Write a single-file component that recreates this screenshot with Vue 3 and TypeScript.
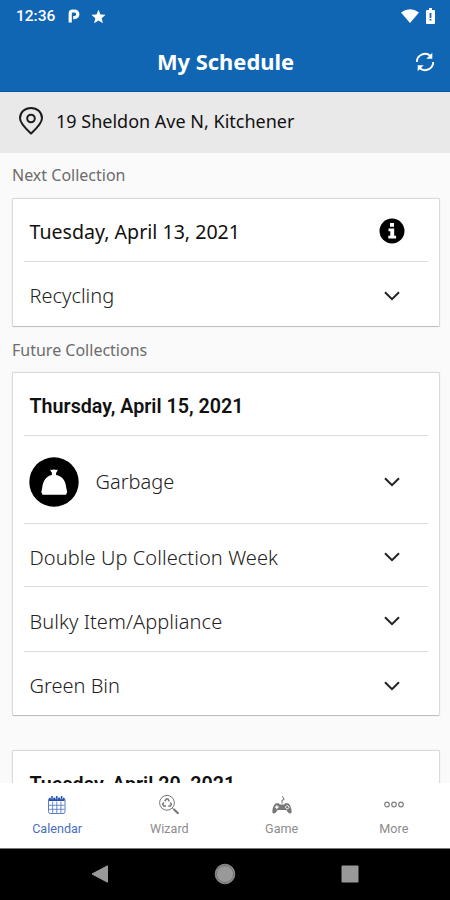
<script setup lang="ts">
interface Item {
  name: string
  icon?: boolean
  kind: string
}

const upcoming: Item[] = [
  { name: 'Garbage', icon: true, kind: 'garbage' },
  { name: 'Double Up Collection Week', kind: 'double' },
  { name: 'Bulky Item/Appliance', kind: 'bulky' },
  { name: 'Green Bin', kind: 'green' },
]
</script>

<template>
  <div class="screen">
    <div class="status">
      <span class="clock">12:36</span>
      <svg class="parking" viewBox="0 0 12 14" width="12" height="14">
        <path d="M2.200 13.500V4.500Q2.200 2 4.800 2H6.500a3.200 3.200 0 0 1 0 6.600H5.200" fill="none" stroke="#fff" stroke-width="3.200" />
      </svg>
      <svg class="star" viewBox="0 0 24 24" width="17" height="17">
        <path d="M12 17.800 18.200 21.500 16.500 14.500 22 9.700 14.800 9.100 12 2.500 9.200 9.100 2 9.700 7.500 14.500 5.800 21.500z" fill="#fff" />
      </svg>
      <span class="grow"></span>
      <svg class="wifi" viewBox="0 0 18 14" width="18" height="14">
        <path d="M0 3.400Q9-3 18 3.400L9 14z" fill="#fff" />
      </svg>
      <svg class="battery" viewBox="0 0 9 16" width="9" height="16">
        <path d="M3 0h3v2h2q1 0 1 1v12q0 1-1 1H1q-1 0-1-1V3q0-1 1-1h2z" fill="#fff" />
        <path d="M4.500 5v5M4.500 11v1.500" stroke="#1264b0" stroke-width="1.800" />
      </svg>
    </div>

    <header class="header">
      <h1>My Schedule</h1>
      <svg class="refresh" viewBox="0 0 20 20" width="20" height="20">
        <path d="M1.800 10A8.200 8.200 0 0 1 15.500 4M18.200 10A8.200 8.200 0 0 1 4.500 16" fill="none" stroke="#fff" stroke-width="1.900" />
        <path d="M17.300.8v6h-6zM2.700 19.200v-6h6z" fill="#fff" />
      </svg>
    </header>

    <div class="address">
      <svg viewBox="0 0 26 30" width="26" height="30">
        <path d="M13 27.500C9 23.800 2 17.500 2 12.200 2 6.200 7 2 13 2s11 4.200 11 10.200C24 17.500 17 23.800 13 27.500z" fill="none" stroke="#1c1c1c" stroke-width="2" stroke-linejoin="round" />
        <circle cx="13" cy="12.500" r="3.800" fill="none" stroke="#1c1c1c" stroke-width="2" />
      </svg>
      <span>19 Sheldon Ave N, Kitchener</span>
    </div>

    <main class="content">
      <h2 class="label">Next Collection</h2>
      <section class="card">
        <div class="row date-row">
          <span class="date">Tuesday, April 13, 2021</span>
          <svg class="info" viewBox="0 0 26 26" width="26" height="26">
            <circle cx="13" cy="13" r="12.500" fill="#000" />
            <path d="M11 5h4v3.800h-4zM9.500 10.500h5.700v7.300h1.900v2.700H9.300v-2.700h2v-4.600H9.500z" fill="#fff" />
          </svg>
        </div>
        <div class="row last recycling">
          <span class="item">Recycling</span>
          <svg class="chevron" viewBox="0 0 16 10" width="16" height="10"><path d="m1 1.200 7 7 7-7" /></svg>
        </div>
      </section>

      <h2 class="label future">Future Collections</h2>
      <section class="card">
        <div class="row date-row thursday"><span class="date strong">Thursday, April 15, 2021</span></div>
        <div v-for="(item, i) in upcoming" :key="item.name" class="row" :class="[item.kind, { last: i === upcoming.length - 1 }]">
          <svg v-if="item.icon" class="bag" viewBox="0 0 50 50" width="50" height="50">
            <circle cx="25" cy="25" r="24.700" fill="#000" />
            <path d="M21.500 12.500q1.200.7 2 .3 1.500-.8 3 0 1 .5 2-.3.700 1-1.400 3.200v2.300c6 1.200 9.400 5 10.200 13l.9 4-1.200 2.800h-23.500l-1.200-2.800.9-4c.6-7 4-11.800 9.700-13v-2.300q-2.100-2.200-1.400-3.200z" fill="#fff" />
          </svg>
          <span class="item">{{ item.name }}</span>
          <svg class="chevron" viewBox="0 0 16 10" width="16" height="10"><path d="m1 1.200 7 7 7-7" /></svg>
        </div>
      </section>

      <section class="card later">
        <div class="row date-row thursday"><span class="date strong">Tuesday, April 20, 2021</span></div>
      </section>
    </main>

    <nav class="tabs">
      <div class="tab active">
        <svg viewBox="0 0 20 20" width="20" height="20" fill="none" stroke="#5a7cc4">
          <rect x="1.500" y="3" width="16.500" height="15.500" rx="2" />
          <path d="M2 4.500h15.500" stroke="#2450aa" stroke-width="3" />
          <path d="M2 10.300h15.500M2 14.300h15.500M5.700 6.500v11.500M9.800 6.500v11.500M13.900 6.500v11.500" stroke-width=".9" />
          <path d="M5 .8v3.400M9.800.8v3.400M14.600.8v3.400" stroke="#fff" stroke-width="2.600" />
          <path d="M5 1v3.500M9.800 1v3.500M14.600 1v3.500" stroke="#2450aa" stroke-width="1.500" />
        </svg>
        <span>Calendar</span>
      </div>
      <div class="tab">
        <svg viewBox="0 0 20 20" width="20" height="20" fill="none" stroke="#777">
          <circle cx="8" cy="7.800" r="7.400" />
          <path d="m5.800 6.300 1.400-2.300h1.800l1.300 2.300M11.300 7.500l1.100 1.800-1 1.700H9.300M7 11H4.700l-1-1.700 1.100-1.800" stroke-width="1.500" />
          <path d="m13.300 13 1.500 1.500" />
          <path d="m14.500 14 5 4.700" stroke-width="2.200" />
        </svg>
        <span>Wizard</span>
      </div>
      <div class="tab">
        <svg viewBox="0 0 20 20" width="20" height="20">
          <path d="M10 8.500V5.700l2-1.700-1.700-2.800" fill="none" stroke="#888" stroke-width="1.200" />
          <path d="M4 8.300h3l.7 1.200h4.600l.7-1.200h3c2 .7 3.600 5.200 3.600 8.300 0 2.500-2.300 2.600-3.600.7L14.300 15H5.700L4 17.300c-1.300 1.900-3.600 1.800-3.600-.7 0-3.100 1.600-7.600 3.600-8.300z" fill="#777" />
          <path d="M4.800 10.200v4M2.800 12.200h4" stroke="#fff" stroke-width="1.200" />
          <path d="m15.300 10.200 2 2-2 2-2-2z" fill="none" stroke="#fff" stroke-width="1" />
        </svg>
        <span>Game</span>
      </div>
      <div class="tab">
        <svg viewBox="0 0 20 20" width="20" height="20" fill="none" stroke="#808080" stroke-width="1.200">
          <circle cx="3" cy="9.500" r="2.300" /><circle cx="10" cy="9.500" r="2.300" /><circle cx="17" cy="9.500" r="2.300" />
        </svg>
        <span>More</span>
      </div>
    </nav>

    <div class="system">
      <svg viewBox="0 0 18 20" width="18" height="20"><path d="M1 10 16.500 1.800v16.400z" fill="#999" stroke="#999" stroke-linejoin="round" /></svg>
      <svg viewBox="0 0 22 22" width="22" height="22"><circle cx="11" cy="11" r="9.800" fill="#999" stroke="#888" /><circle cx="11" cy="11" r="8.500" fill="none" stroke="#666" stroke-width=".8" /></svg>
      <svg viewBox="0 0 18 18" width="18" height="18"><rect x=".5" y=".5" width="17" height="17" rx="1" fill="#999" /></svg>
    </div>
  </div>
</template>

<style>
body {
  margin: 0;
  background: #fafafa;
}
</style>

<style scoped>
.screen {
  width: 450px;
  height: 900px;
  display: flex;
  flex-direction: column;
  overflow: hidden;
  background: #fafafa;
  font-family: "Noto Sans", "Open Sans", sans-serif;
  color: #111;
}
.screen svg { display: block; flex: none; }
.status {
  height: 32px;
  flex: none;
  display: flex;
  align-items: center;
  background: #1066b2;
  padding: 0 15px 0 16px;
  box-sizing: border-box;
}
.clock {
  font: 500 15.500px/32px Roboto, sans-serif;
  color: #fff;
  width: 52px;
}
.star { margin-left: 10px; }
.grow { flex: 1; }
.battery { margin-left: 7px; }
.header {
  height: 60px;
  flex: none;
  box-sizing: border-box;
  display: grid;
  grid-template-columns: 1fr auto 1fr;
  align-items: center;
  background: #1066b2;
  border-bottom: 1px solid #0755a5;
  padding-right: 15px;
}
h1 {
  margin: 0 0 0 16px;
  grid-column: 2;
  font-size: 21.900px;
  line-height: 58px;
  font-weight: 700;
  color: #fff;
}
.refresh { justify-self: end; }
.address {
  height: 61px;
  flex: none;
  box-sizing: border-box;
  display: flex;
  align-items: center;
  gap: 12px;
  padding: 0 18px 3px;
  background: #e9e9e9;
  font-size: 18px;
}
.content {
  flex: 1;
  min-height: 0;
  overflow: hidden;
  padding: 0 10px 0 12px;
}
.label {
  margin: 0;
  height: 45px;
  font-size: 16px;
  font-weight: 400;
  line-height: 45px;
  color: #6c6c6c;
}
.future { line-height: 47px; }
.card {
  box-sizing: border-box;
  background: #fff;
  border: 1px solid #dadada;
  border-bottom-color: #bdbdbd;
  border-radius: 2px;
  box-shadow: 0 0 1px #ccc;
  padding: 0 11px;
}
.later { margin-top: 34px; }
.row {
  height: 63px;
  box-sizing: border-box;
  display: flex;
  align-items: center;
  padding: 4px 28.500px 0 5.500px;
  border-bottom: 1px solid #dcdcdc;
}
.date-row { padding: 2px 23px 0 5.500px; }
.thursday { padding-top: 5px; }
.garbage { height: 88px; }
.bulky { height: 65px; }
.last { height: 64px; border-bottom: 0; }
.recycling { padding-top: 3px; }
.green { height: 63px; }
.date { font-size: 19.600px; }
.strong { font-family: Roboto, sans-serif; font-weight: 600; font-size: 19.700px; }
.info, .chevron { margin-left: auto; }
.item { font-size: 20px; font-weight: 300; color: #222; }
.double .item, .bulky .item { letter-spacing: 0.080px; }
.bag { margin: 0 17px 0 -1px; }
.chevron path { fill: none; stroke: #222; stroke-width: 2; }
.tabs {
  height: 66px;
  flex: none;
  display: grid;
  grid-template-columns: repeat(4, 1fr);
  background: #fff;
  border-bottom: 1px solid #777;
  box-sizing: border-box;
  padding-left: 1px;
}
.tab {
  display: flex;
  flex-direction: column;
  align-items: center;
  padding-top: 12px;
  font: 400 12.600px/18px Roboto, sans-serif;
  color: #8c8c8c;
}
.tab span { margin-top: 5px; }
.active { color: #4a70bd; }
.system {
  height: 51px;
  flex: none;
  box-sizing: border-box;
  display: flex;
  align-items: center;
  justify-content: space-between;
  padding: 0 91px 2px;
  background: #000;
}
</style>
